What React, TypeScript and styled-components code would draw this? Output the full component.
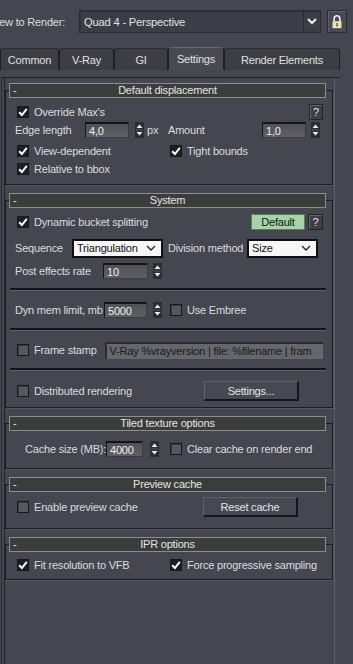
import React from "react";
import styled, { createGlobalStyle } from "styled-components";

const GlobalStyle = createGlobalStyle`
  html, body {
    margin: 0;
    padding: 0;
    background: #444750;
  }
  body {
    font-family: "Liberation Sans", Arial, sans-serif;
    font-size: 11px;
    letter-spacing: -0.2px;
    color: #dcdcdc;
  }
  * { box-sizing: border-box; }
`;

const Page = styled.div`
  width: 353px;
  height: 664px;
  overflow: hidden;
  background: #444750;
  display: flex;
  flex-direction: column;
`;

/* top viewport selector */
const TopBar = styled.div`
  display: flex;
  align-items: center;
  height: 23px;
  margin-top: 10px;
  margin-left: -10px;
`;

const TopLabel = styled.span`
  width: 89px;
  white-space: nowrap;
  color: #dcdcdc;
`;

const ViewSelect = styled.div`
  display: flex;
  width: 242px;
  height: 23px;
  background: #3b3e46;
  border: 1px solid #2a2c32;
  box-shadow: inset 1px 1px 0 #30323a;
`;

const ViewValue = styled.span`
  flex: 1;
  display: flex;
  align-items: center;
  padding-left: 4px;
  font-size: 11.2px;
  color: #e2e2e2;
`;

const ViewArrow = styled.span`
  width: 17px;
  display: flex;
  align-items: center;
  justify-content: center;
  border-left: 1px solid #2a2c32;
`;

const LockButton = styled.div`
  width: 20px;
  height: 23px;
  margin-left: 6px;
  display: flex;
  align-items: center;
  justify-content: center;
  background: #474a52;
  border: 1px solid #2a2c31;
  box-shadow: inset 1px 1px 0 #5d6068;
`;

/* tabs */
const TabRow = styled.div`
  display: flex;
  align-items: flex-end;
  height: 23px;
  margin-top: 14px;
`;

const Tab = styled.div<{ $w: number; $active?: boolean }>`
  width: ${(p) => p.$w}px;
  height: ${(p) => (p.$active ? 23 : 22)}px;
  display: flex;
  align-items: center;
  justify-content: center;
  background: ${(p) => (p.$active ? "#474a51" : "#3c3e43")};
  border: 1px solid #1f2024;
  border-bottom: none;
  border-top-color: ${(p) => (p.$active ? "#62656c" : "#2a2b2f")};
  border-radius: 3px 3px 0 0;
  color: #e0e0e0;
`;

const TabPanel = styled.div`
  flex: 1;
  display: flex;
  flex-direction: column;
  width: 340px;
  margin-top: 7px;
  margin-left: 1px;
  border-top: 1px solid #202226;
  border-left: 1px solid #2b2d32;
`;

const ScrollArea = styled.div`
  flex: 1;
  width: 331px;
  margin-left: 2px;
  padding-top: 5px;
  border-left: 1px solid #24262a;
  border-right: 1px solid #5c5f67;
`;

/* rollouts */
const Rollout = styled.div`
  margin: 0 1px 8px 0;
`;

const RollHeader = styled.div`
  position: relative;
  z-index: 1;
  display: grid;
  grid-template-columns: 20px 1fr 20px;
  align-items: center;
  height: 15px;
  margin: 0 7px 0 4px;
  background: #3b3d3a;
  border: 1px solid #8b8e91;
  color: #e4e4e4;
  line-height: 13px;
`;

const Minus = styled.span`
  padding-left: 3px;
  color: #e4e4e4;
`;

const RollTitle = styled.span`
  text-align: center;
`;

const RollBody = styled.div<{ $pt: number; $pb: number }>`
  margin-top: -8px;
  padding: ${(p) => p.$pt}px 9px ${(p) => p.$pb}px 9px;
  border: 1px solid #1b1c1f;
  box-shadow: 1px 1px 0 #54575f;
`;

const Row = styled.div<{ $h?: number; $mt?: number }>`
  display: flex;
  align-items: center;
  height: ${(p) => p.$h ?? 18}px;
  margin-top: ${(p) => p.$mt ?? 0}px;
`;

const Col = styled.div<{ $w?: number }>`
  display: flex;
  align-items: center;
  width: ${(p) => (p.$w ? `${p.$w}px` : "auto")};
  flex: ${(p) => (p.$w ? "none" : 1)};
  height: 100%;
`;

const Label = styled.span<{ $w?: number; $ml?: number }>`
  width: ${(p) => (p.$w ? `${p.$w}px` : "auto")};
  margin-left: ${(p) => p.$ml ?? 0}px;
  flex: none;
  white-space: nowrap;
  color: #dcdcdc;
`;

const Spacer = styled.div`
  flex: 1;
`;

const CheckWrap = styled.label`
  display: flex;
  align-items: center;
  gap: 5px;
  margin-left: 2px;
  white-space: nowrap;
  color: #dcdcdc;
`;

const Box = styled.span<{ $on: boolean }>`
  width: 12px;
  height: 12px;
  display: flex;
  align-items: center;
  justify-content: center;
  background: ${(p) => (p.$on ? "#1e1f22" : "#56585d")};
  border: 1px solid #17181a;
  box-shadow: ${(p) => (p.$on ? "none" : "inset 1px 1px 0 #3a3c40")};
`;

const NumInput = styled.div<{ $w: number }>`
  width: ${(p) => p.$w}px;
  height: 16px;
  display: flex;
  align-items: center;
  padding-left: 3px;
  background: linear-gradient(#505256, #5d5f63);
  border-top: 2px solid #151517;
  border-left: 1px solid #151517;
  border-right: 1px solid #3a3c40;
  border-bottom: 1px solid #3a3c40;
  color: #f0f0f0;
`;

const SpinBox = styled.div<{ $ml: number }>`
  width: 9px;
  height: 16px;
  margin-left: ${(p) => p.$ml}px;
  flex: none;
  display: flex;
`;

const Unit = styled.span`
  margin-left: 3px;
`;

const DropSelect = styled.div<{ $w: number }>`
  width: ${(p) => p.$w}px;
  height: 19px;
  display: flex;
  align-items: center;
  justify-content: space-between;
  padding: 0 5px 0 3px;
  background: #f6f6f6;
  border: 2px solid #101012;
  color: #111;
`;

const SmallButton = styled.div<{ $green?: boolean; $w: number }>`
  width: ${(p) => p.$w}px;
  height: 16px;
  margin-left: ${(p) => (p.$green ? 0 : 3)}px;
  display: flex;
  align-items: center;
  justify-content: center;
  background: ${(p) => (p.$green ? "#a7d3a6" : "#3d3f45")};
  border: 1px solid ${(p) => (p.$green ? "#5d7a5c" : "#23252a")};
  box-shadow: ${(p) => (p.$green ? "none" : "inset 1px 1px 0 #62656c")};
  color: ${(p) => (p.$green ? "#151515" : "#e2e2e2")};
`;

const PushButton = styled.div`
  width: 95px;
  height: 20px;
  display: flex;
  align-items: center;
  justify-content: center;
  background: #464951;
  border-top: 1px solid #5f626a;
  border-left: 1px solid #5f626a;
  border-right: 2px solid #151619;
  border-bottom: 2px solid #151619;
  color: #e4e4e4;
`;

const StampField = styled.div`
  flex: 1;
  height: 17px;
  margin-left: 8px;
  overflow: hidden;
  white-space: nowrap;
  display: flex;
  align-items: center;
  padding-left: 3px;
  background: #65676b;
  border-top: 2px solid #2b2c2f;
  border-left: 2px solid #2b2c2f;
  color: #1a1a1a;
`;

const Separator = styled.div<{ $mt: number }>`
  height: 3px;
  margin: ${(p) => p.$mt}px -3px 0 -5px;
  border-top: 2px solid #141517;
  border-bottom: 1px solid #5b5e66;
`;

/* small drawings */
const Check = ({ on }: { on: boolean }) => (
  <Box $on={on}>
    {on && (
      <svg width="10" height="10" viewBox="0 0 10 10">
        <path d="M1.2 5.2 L3.9 8 L8.8 1.8" fill="none" stroke="#fff" strokeWidth="2" />
      </svg>
    )}
  </Box>
);

const CheckField = ({ on, text }: { on: boolean; text: string }) => (
  <CheckWrap>
    <Check on={on} />
    {text}
  </CheckWrap>
);

const Spinner = ({ ml }: { ml: number }) => (
  <SpinBox $ml={ml}>
    <svg width="9" height="16" viewBox="0 0 9 16">
      <rect x="0" y="0" width="9" height="16" fill="#2b2d31" />
      <path d="M1.5 6 L4.5 2.5 L7.5 6 Z" fill="#eeeeee" />
      <line x1="1" y1="8" x2="8" y2="8" stroke="#55585e" strokeWidth="1" />
      <path d="M1.5 10 L4.5 13.5 L7.5 10 Z" fill="#eeeeee" />
    </svg>
  </SpinBox>
);

const Chevron = ({ color, w = 2 }: { color: string; w?: number }) => (
  <svg width="10" height="7" viewBox="0 0 10 7">
    <path d="M1 1 L5 5 L9 1" fill="none" stroke={color} strokeWidth={w} />
  </svg>
);

const LockIcon = () => (
  <svg width="12" height="15" viewBox="0 0 12 15">
    <path d="M3.2 7.5 V4.6 a2.8 2.8 0 0 1 5.6 0 V7.5" fill="none" stroke="#f2f2f2" strokeWidth="1.6" />
    <rect x="1.5" y="7.2" width="9" height="7" fill="#e8e2b4" />
    <rect x="5.4" y="9" width="1.3" height="3.5" fill="#4a4a40" />
  </svg>
);

const Rollup = ({
  title,
  pt,
  pb,
  children,
}: {
  title: string;
  pt: number;
  pb: number;
  children: React.ReactNode;
}) => (
  <Rollout>
    <RollHeader>
      <Minus>-</Minus>
      <RollTitle>{title}</RollTitle>
      <span />
    </RollHeader>
    <RollBody $pt={pt} $pb={pb}>
      {children}
    </RollBody>
  </Rollout>
);

const tabs = [
  { name: "Common", w: 59 },
  { name: "V-Ray", w: 55 },
  { name: "GI", w: 54 },
  { name: "Settings", w: 56, active: true },
  { name: "Render Elements", w: 116 },
];

const App: React.FC = () => {
  return (
    <>
      <GlobalStyle />
      <Page>
        <TopBar>
          <TopLabel>View to Render:</TopLabel>
          <ViewSelect>
            <ViewValue>Quad 4 - Perspective</ViewValue>
            <ViewArrow>
              <Chevron color="#ececec" w={2.2} />
            </ViewArrow>
          </ViewSelect>
          <LockButton>
            <LockIcon />
          </LockButton>
        </TopBar>

        <TabRow>
          {tabs.map((t) => (
            <Tab key={t.name} $w={t.w} $active={t.active}>
              {t.name}
            </Tab>
          ))}
        </TabRow>

        <TabPanel>
          <ScrollArea>
            <Rollup title="Default displacement" pt={12} pb={6}>
              <Row>
                <CheckField on text="Override Max's" />
                <Spacer />
                <SmallButton $w={14}>?</SmallButton>
              </Row>
              <Row>
                <Col $w={153}>
                  <Label $w={70}>Edge length</Label>
                  <NumInput $w={44}>4,0</NumInput>
                  <Spinner ml={6} />
                  <Unit>px</Unit>
                </Col>
                <Col>
                  <Label $w={94}>Amount</Label>
                  <NumInput $w={44}>1,0</NumInput>
                  <Spinner ml={5} />
                </Col>
              </Row>
              <Row $mt={3}>
                <Col $w={153}>
                  <CheckField on text="View-dependent" />
                </Col>
                <Col>
                  <CheckField on text="Tight bounds" />
                </Col>
              </Row>
              <Row>
                <CheckField on text="Relative to bbox" />
              </Row>
            </Rollup>

            <Rollup title="System" pt={12} pb={6}>
              <Row>
                <CheckField on text="Dynamic bucket splitting" />
                <Spacer />
                <SmallButton $green $w={54}>
                  Default
                </SmallButton>
                <SmallButton $w={15}>?</SmallButton>
              </Row>
              <Row $mt={8}>
                <Col $w={153}>
                  <Label $w={57}>Sequence</Label>
                  <DropSelect $w={91}>
                    Triangulation
                    <Chevron color="#222" w={1.3} />
                  </DropSelect>
                </Col>
                <Col>
                  <Label $w={79}>Division method</Label>
                  <DropSelect $w={71}>
                    Size
                    <Chevron color="#222" w={1.3} />
                  </DropSelect>
                </Col>
              </Row>
              <Row $mt={5}>
                <Label $w={88}>Post effects rate</Label>
                <NumInput $w={45}>10</NumInput>
                <Spinner ml={5} />
              </Row>
              <Separator $mt={8} />
              <Row $mt={10}>
                <Col $w={153}>
                  <Label $w={89}>Dyn mem limit, mb</Label>
                  <NumInput $w={43}>5000</NumInput>
                  <Spinner ml={6} />
                </Col>
                <Col>
                  <CheckField on={false} text="Use Embree" />
                </Col>
              </Row>
              <Separator $mt={9} />
              <Row $mt={10}>
                <CheckField on={false} text="Frame stamp" />
                <StampField>V-Ray %vrayversion | file: %filename | fram</StampField>
              </Row>
              <Separator $mt={9} />
              <Row $h={20} $mt={10}>
                <Col $w={189}>
                  <CheckField on={false} text="Distributed rendering" />
                </Col>
                <PushButton>Settings...</PushButton>
              </Row>
            </Rollup>

            <Rollup title="Tiled texture options" pt={16} pb={10}>
              <Row>
                <Col $w={153}>
                  <Label $w={81} $ml={10}>
                    Cache size (MB):
                  </Label>
                  <NumInput $w={37}>4000</NumInput>
                  <Spinner ml={7} />
                </Col>
                <Col>
                  <CheckField on={false} text="Clear cache on render end" />
                </Col>
              </Row>
            </Rollup>

            <Rollup title="Preview cache" pt={12} pb={11}>
              <Row $h={20}>
                <Col $w={188}>
                  <CheckField on={false} text="Enable preview cache" />
                </Col>
                <PushButton>Reset cache</PushButton>
              </Row>
            </Rollup>

            <Rollup title="IPR options" pt={11} pb={5}>
              <Row>
                <Col $w={153}>
                  <CheckField on text="Fit resolution to VFB" />
                </Col>
                <Col>
                  <CheckField on text="Force progressive sampling" />
                </Col>
              </Row>
            </Rollup>
          </ScrollArea>
        </TabPanel>
      </Page>
    </>
  );
};

export default App;
